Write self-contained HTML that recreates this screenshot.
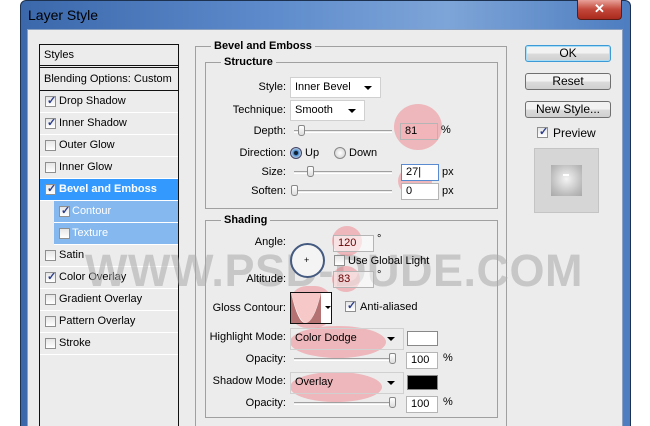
<!DOCTYPE html>
<html><head><meta charset="utf-8"><style>
*{margin:0;padding:0;box-sizing:border-box}
html,body{width:650px;height:426px;overflow:hidden}
body{background:#fff;position:relative;font-family:"Liberation Sans",Arial,sans-serif;font-size:11px;color:#000}
.a{position:absolute}
.t{position:absolute;white-space:nowrap;font-size:11px;line-height:13px}
.r{text-align:right}
.inp{position:absolute;background:#fff;border:1px solid #b5b5b5;height:17px;font-size:11px;line-height:15px;padding-left:4px}
.dd{position:absolute;background:#fff;border:1px solid #d0d0d0;height:21px;font-size:11px;line-height:19px;padding-left:4px}
.dd:after{content:"";position:absolute;right:8px;top:8px;border-left:4px solid transparent;border-right:4px solid transparent;border-top:4px solid #000}
.cb{position:absolute;width:11px;height:11px;border:1px solid #8f8f8f;background:linear-gradient(#e6e6e6,#fff)}
.ck:after{content:"✓";position:absolute;left:1px;top:-3px;font-size:11px;color:#2c3e8c;font-weight:bold}
.row{position:absolute;left:40px;width:138px;height:22px;border-bottom:1px solid #fff}
.row .cb{left:5px;top:5px}
.row span{position:absolute;left:19px;top:4px;font-size:11px}
.sl{position:absolute;height:3px;border-top:1px solid #a0a0a0;border-bottom:1px solid #fff}
.th{position:absolute;width:7px;height:11px;border:1px solid #888;border-radius:2px 2px 3px 3px;background:linear-gradient(#fff,#ddd)}
.blob{position:absolute;background:rgba(238,110,120,.42);border-radius:50%}
.btn{position:absolute;left:525px;width:86px;height:17px;border:1px solid #707070;border-radius:3px;background:linear-gradient(#f2f2f2 50%,#dcdcdc 50%,#cfcfcf);text-align:center;font-size:12px;line-height:15px}
.grp{position:absolute;border:1px solid #a0a0a0}
.lg{position:absolute;background:#ececec;font-weight:bold;font-size:11px;padding:0 3px;line-height:13px}
</style></head><body>
<div class="a" style="left:20px;top:0;width:611px;height:426px;background:linear-gradient(90deg,#3b68aa,#5c8acb 40%,#7ea5d8 70%,#4d7dc0);border-radius:6px 6px 0 0;border:1px solid #1d3150;border-bottom:none"></div>
<div class="t" style="left:28px;top:7px;font-size:14px;line-height:16px">Layer Style</div>
<div class="a" style="left:577px;top:0;width:45px;height:20px;background:linear-gradient(#e8a29a,#c2473a 50%,#a92a1e);border:1px solid #5a1c14;border-top:none;border-radius:0 0 4px 4px;color:#fff;text-align:center;font-weight:bold;font-size:13px;line-height:18px">✕</div>
<div class="a" style="left:27px;top:29px;width:596px;height:397px;background:#ececec;border:1px solid #8aa0c0;border-bottom:none"></div>

<div class="a" style="left:39px;top:44px;width:140px;height:382px;border:1px solid #111;border-bottom:none;background:#ececec"></div>
<div class="t" style="left:44px;top:49px">Styles</div>
<div class="a" style="left:40px;top:65px;width:138px;height:3px;border-top:1px solid #111;border-bottom:1px solid #111"></div>
<div class="t" style="left:44px;top:73px">Blending Options: Custom</div>
<div class="a" style="left:40px;top:90px;width:138px;height:1px;background:#111"></div>
<div class="row" style="top:91px"><div class="cb ck"></div><span>Drop Shadow</span></div>
<div class="row" style="top:113px"><div class="cb ck"></div><span>Inner Shadow</span></div>
<div class="row" style="top:135px"><div class="cb"></div><span>Outer Glow</span></div>
<div class="row" style="top:157px"><div class="cb"></div><span>Inner Glow</span></div>
<div class="row" style="top:179px;background:#3399ff;color:#fff"><div class="cb ck"></div><span style="font-weight:bold">Bevel and Emboss</span></div>
<div class="row" style="top:201px;left:54px;width:124px;background:#85b8ee;color:#fff"><div class="cb ck" style="left:5px"></div><span style="left:18px">Contour</span></div>
<div class="row" style="top:223px;left:54px;width:124px;background:#85b8ee;color:#fff"><div class="cb" style="left:5px"></div><span style="left:18px">Texture</span></div>
<div class="row" style="top:245px"><div class="cb"></div><span>Satin</span></div>
<div class="row" style="top:267px"><div class="cb ck"></div><span>Color Overlay</span></div>
<div class="row" style="top:289px"><div class="cb"></div><span>Gradient Overlay</span></div>
<div class="row" style="top:311px"><div class="cb"></div><span>Pattern Overlay</span></div>
<div class="row" style="top:333px"><div class="cb"></div><span>Stroke</span></div>

<div class="grp" style="left:195px;top:46px;width:312px;height:390px"></div>
<div class="lg" style="left:211px;top:40px">Bevel and Emboss</div>
<div class="grp" style="left:205px;top:62px;width:293px;height:147px"></div>
<div class="lg" style="left:221px;top:56px">Structure</div>
<div class="grp" style="left:205px;top:220px;width:293px;height:198px"></div>
<div class="lg" style="left:221px;top:214px">Shading</div>

<div class="t" style="left:85px;top:248px;font-family:'Liberation Sans',sans-serif;font-weight:bold;font-size:45px;line-height:46px;color:rgba(170,170,170,.55);letter-spacing:0.5px">WWW.PSD-DUDE.COM</div>

<div class="blob" style="left:394px;top:104px;width:48px;height:46px"></div>
<div class="blob" style="left:398px;top:166px;width:34px;height:30px"></div>
<div class="blob" style="left:332px;top:226px;width:30px;height:30px"></div>
<div class="blob" style="left:332px;top:266px;width:28px;height:26px"></div>
<div class="blob" style="left:290px;top:286px;width:42px;height:42px;border-radius:40%"></div>
<div class="blob" style="left:290px;top:326px;width:96px;height:32px"></div>
<div class="blob" style="left:290px;top:372px;width:92px;height:30px"></div>

<div class="t r" style="left:220px;width:66px;top:81px">Style:</div>
<div class="dd" style="left:290px;top:77px;width:91px">Inner Bevel</div>
<div class="t r" style="left:220px;width:66px;top:104px">Technique:</div>
<div class="dd" style="left:290px;top:100px;width:75px">Smooth</div>
<div class="t r" style="left:220px;width:66px;top:125px">Depth:</div>
<div class="sl" style="left:294px;top:130px;width:98px"></div><div class="th" style="left:298px;top:125px"></div>
<div class="inp" style="left:400px;top:123px;width:38px;background:rgba(245,180,185,.6)">81</div><div class="t" style="left:441px;top:124px">%</div>
<div class="t r" style="left:220px;width:66px;top:147px">Direction:</div>
<div class="a" style="left:290px;top:147px;width:12px;height:12px;border-radius:50%;background:radial-gradient(#123 25%,#4a8fd6 35%,#bcd 70%);border:1px solid #446"></div>
<div class="t" style="left:305px;top:147px">Up</div>
<div class="a" style="left:334px;top:147px;width:12px;height:12px;border-radius:50%;background:radial-gradient(#fff,#ccc);border:1px solid #888"></div>
<div class="t" style="left:349px;top:147px">Down</div>
<div class="t r" style="left:220px;width:66px;top:166px">Size:</div>
<div class="sl" style="left:294px;top:171px;width:98px"></div><div class="th" style="left:307px;top:166px"></div>
<div class="inp" style="left:401px;top:164px;width:38px;border-color:#5a8ad0">27|</div><div class="t" style="left:442px;top:166px">px</div>
<div class="t r" style="left:220px;width:66px;top:185px">Soften:</div>
<div class="sl" style="left:294px;top:190px;width:98px"></div><div class="th" style="left:291px;top:185px"></div>
<div class="inp" style="left:401px;top:183px;width:38px">0</div><div class="t" style="left:442px;top:185px">px</div>

<div class="t r" style="left:220px;width:66px;top:236px">Angle:</div>
<div class="inp" style="left:333px;top:235px;width:41px;background:rgba(255,255,255,.6);color:#600">120</div><div class="t" style="left:377px;top:233px">°</div>
<div class="a" style="left:290px;top:243px;width:35px;height:35px;border-radius:50%;border:2px solid #445a80;background:#f4f4f4"></div>
<div class="t" style="left:304px;top:254px;font-size:9px">+</div>
<div class="cb" style="left:334px;top:255px"></div><div class="t" style="left:348px;top:255px">Use Global Light</div>
<div class="t r" style="left:220px;width:66px;top:273px">Altitude:</div>
<div class="inp" style="left:333px;top:271px;width:41px;background:rgba(255,255,255,.5);color:#600">83</div><div class="t" style="left:377px;top:269px">°</div>
<div class="t r" style="left:200px;width:86px;top:302px">Gloss Contour:</div>
<div class="a" style="left:290px;top:292px;width:42px;height:32px;border:1px solid #111;background:#fff">
<svg width="40" height="30" style="position:absolute;left:0;top:0"><path d="M0 0 Q7 30 14 30 Q23 30 30 0 L30 30 L0 30Z" fill="#b47272"/><path d="M0 0 Q8 30 15 30 Q22 30 30 0" fill="#f6c8c8"/><path d="M34 13l3 3 3-3z" fill="#000"/></svg></div>
<div class="cb ck" style="left:345px;top:301px"></div><div class="t" style="left:360px;top:301px">Anti-aliased</div>
<div class="t r" style="left:200px;width:86px;top:331px">Highlight Mode:</div>
<div class="dd" style="left:290px;top:328px;width:114px;height:22px;background:transparent">Color Dodge</div>
<div class="a" style="left:407px;top:331px;width:31px;height:15px;border:1px solid #888;background:#fff"></div>
<div class="t r" style="left:200px;width:86px;top:353px">Opacity:</div>
<div class="sl" style="left:294px;top:358px;width:100px"></div><div class="th" style="left:389px;top:353px"></div>
<div class="inp" style="left:406px;top:352px;width:32px">100</div><div class="t" style="left:443px;top:352px">%</div>
<div class="t r" style="left:200px;width:86px;top:375px">Shadow Mode:</div>
<div class="dd" style="left:290px;top:372px;width:114px;height:22px;background:transparent">Overlay</div>
<div class="a" style="left:407px;top:375px;width:31px;height:15px;border:1px solid #888;background:#000"></div>
<div class="t r" style="left:200px;width:86px;top:397px">Opacity:</div>
<div class="sl" style="left:294px;top:402px;width:100px"></div><div class="th" style="left:389px;top:397px"></div>
<div class="inp" style="left:406px;top:396px;width:32px">100</div><div class="t" style="left:443px;top:396px">%</div>

<div class="btn" style="top:45px;border-color:#3c9bd6;box-shadow:0 0 0 1px #a9ddf5 inset">OK</div>
<div class="btn" style="top:73px">Reset</div>
<div class="btn" style="top:101px">New Style...</div>
<div class="cb ck" style="left:537px;top:127px"></div><div class="t" style="left:553px;top:126px;font-size:12px;line-height:14px">Preview</div>
<div class="a" style="left:534px;top:148px;width:65px;height:65px;background:#d6d6d6;border:1px solid #c4c4c4"></div>
<div class="a" style="left:551px;top:165px;width:31px;height:31px;background:radial-gradient(circle at 50% 45%,#f4f4f4,#bbb 70%,#a8a8a8)"></div>
<div class="a" style="left:563px;top:174px;width:6px;height:2px;background:#fff"></div>
</body></html>
